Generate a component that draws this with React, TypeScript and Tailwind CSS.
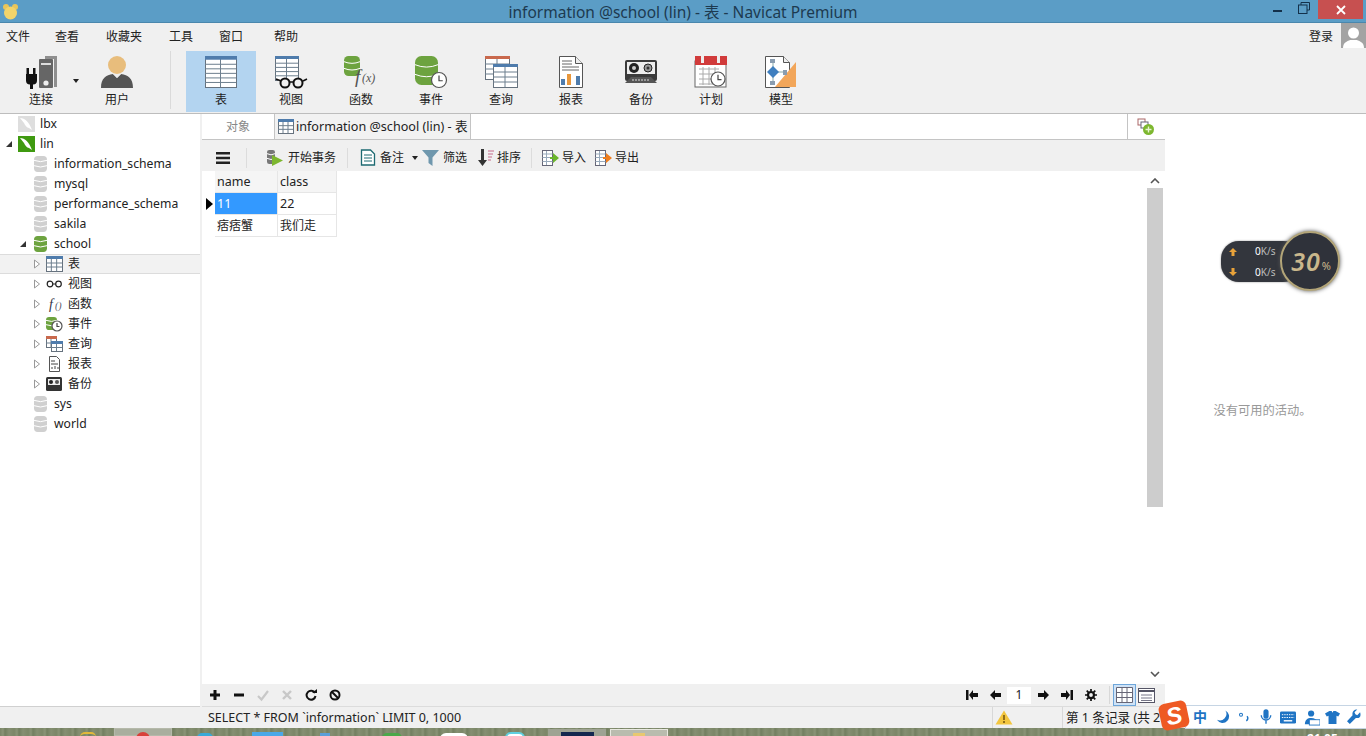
import React from "react";

const font = { fontFamily: '"Noto Sans","Noto Sans CJK SC",sans-serif' };

const S = ({ w = 48, h = 48, vb = "0 0 48 48", children }: { w?: number; h?: number; vb?: string; children: React.ReactNode }) => (
  <svg width={w} height={h} viewBox={vb} className="shrink-0 block">{children}</svg>
);

const TableGrid = ({ x, y, w, h, head = "#4f7cac", rows = 5, cols = 2 }: { x: number; y: number; w: number; h: number; head?: string; rows?: number; cols?: number }) => {
  const lines = [];
  const hh = Math.max(3, h * 0.12);
  for (let i = 1; i < rows; i++) lines.push(<line key={"r" + i} x1={x} x2={x + w} y1={y + hh + ((h - hh) * i) / rows} y2={y + hh + ((h - hh) * i) / rows} stroke="#6d7f8e" strokeWidth="1" />);
  for (let i = 1; i < cols; i++) lines.push(<line key={"c" + i} y1={y} y2={y + h} x1={x + (w * i) / cols} x2={x + (w * i) / cols} stroke="#6d7f8e" strokeWidth="1" />);
  return (
    <g>
      <rect x={x + 0.5} y={y + 0.5} width={w} height={h} fill="#fff" stroke="#66727e" />
      {lines}
      <rect x={x} y={y} width={w + 1} height={hh} fill={head} />
    </g>
  );
};

const Db = ({ x, y, w, h, c = "#6da33f" }: { x: number; y: number; w: number; h: number; c?: string }) => {
  const b = h / 3;
  return (
    <g>
      <rect x={x} y={y} width={w} height={h} rx={w * 0.28} fill={c} />
      {[1, 2].map((i) => (
        <path key={i} d={`M${x} ${y + i * b - 1}q${w / 2} ${b * 0.5} ${w} 0`} fill="none" stroke="#fff" strokeWidth="1" />
      ))}
    </g>
  );
};

const Clock = ({ cx, cy, r }: { cx: number; cy: number; r: number }) => (
  <g>
    <circle cx={cx} cy={cy} r={r} fill="#fff" stroke="#555" strokeWidth="1.2" />
    <path d={`M${cx} ${cy - r * 0.6}V${cy + r * 0.1}H${cx + r * 0.5}`} fill="none" stroke="#444" strokeWidth="1.2" />
  </g>
);

const IconConnect = () => (
  <S w={32} h={33} vb="0 0 32 33">
    <path d="M20 0h12v31h-3V3h-9z" fill="#8f8f8f" />
    <rect x="14" y="3" width="14" height="29" rx="1" fill="#666" />
    <rect x="16" y="7" width="10" height="2" fill="#ddd" />
    <circle cx="21" cy="27" r="2.6" fill="#eee" />
    <path d="M1.500 12h2.500v6h4v-6h2.500v6h1.500v6.500a4 4 0 0 1-4 4V33h-3v-4.500a4 4 0 0 1-4-4V18h.5z" fill="#111" />
  </S>
);
const IconUser = () => (
  <S w={36} h={36} vb="0 0 36 36">
    <path d="M2 34c0-10 5-13 12-14l4 4 4-4c7 1 12 4 12 14z" fill="#555" />
    <circle cx="18" cy="11" r="9" fill="#e8bd7c" />
    <path d="M14 20h8l-4 4z" fill="#eee" />
  </S>
);
const IconTable = () => <S w={34} h={34} vb="0 0 34 34"><TableGrid x={1} y={1} w={31} h={31} rows={6} /></S>;
const IconView = () => (
  <S w={34} h={34} vb="0 0 34 34">
    <TableGrid x={1} y={1} w={23} h={24} rows={5} />
    <rect x="4" y="24" width="26" height="8" fill="#f0f0f0" />
    <circle cx="11" cy="28" r="4.500" fill="#f0f0f0" stroke="#111" strokeWidth="2" />
    <circle cx="24" cy="28" r="4.500" fill="#f0f0f0" stroke="#111" strokeWidth="2" />
    <path d="M15 27h5M2 24l5 2M29 26l4-2" stroke="#111" strokeWidth="1.600" />
  </S>
);
const IconFunc = () => (
  <S w={34} h={34} vb="0 0 34 34">
    <Db x={0} y={1} w={16} h={20} />
    <text x="11" y="28" fontFamily="Liberation Serif, serif" fontStyle="italic" fontSize="19" fill="#555">f</text>
    <text x="18" y="27" fontFamily="Liberation Serif, serif" fontStyle="italic" fontSize="12" fill="#555">(x)</text>
  </S>
);
const IconEvent = () => (
  <S w={34} h={34} vb="0 0 34 34">
    <Db x={1} y={1} w={23} h={29} />
    <Clock cx={25} cy={25} r={7.500} />
  </S>
);
const IconQuery = () => (
  <S w={34} h={34} vb="0 0 34 34">
    <TableGrid x={1} y={1} w={24} h={23} head="#c9694d" rows={4} />
    <TableGrid x={9} y={9} w={24} h={23} rows={4} />
  </S>
);
const IconReport = () => (
  <S w={26} h={34} vb="0 0 26 34">
    <path d="M1.500 1.500h16l7 7v24h-23z" fill="#fff" stroke="#555" />
    <path d="M17.500 1.500v7h7" fill="#eee" stroke="#555" />
    <path d="M4 6h10M4 9h10M4 12h17M4 15h17" stroke="#666" />
    <rect x="3" y="24" width="4" height="6" fill="#4f7cac" />
    <rect x="9" y="19" width="4" height="11" fill="#e8973c" />
    <rect x="18" y="21" width="4" height="9" fill="#4f7cac" />
  </S>
);
const IconBackup = () => (
  <S w={34} h={26} vb="0 0 34 26">
    <rect x="1" y="1" width="32" height="21" rx="2" fill="#3b3b3b" />
    <rect x="3" y="3" width="28" height="12" fill="#eee" />
    <circle cx="10" cy="9" r="5" fill="#222" /><circle cx="10" cy="9" r="2" fill="#ccc" />
    <circle cx="24" cy="9" r="4" fill="#999" stroke="#222" /><circle cx="24" cy="9" r="1.500" fill="#333" />
    <path d="M1 24l6-6h20l6 6z" fill="#555" />
    <path d="M8 21h18" stroke="#ddd" strokeDasharray="2 1" />
  </S>
);
const IconPlan = () => (
  <S w={34} h={34} vb="0 0 34 34">
    <rect x="1" y="6" width="31" height="26" fill="#fff" stroke="#666" />
    <rect x="1" y="1" width="32" height="9" fill="#d13b3b" />
    <rect x="7" y="1" width="3" height="7" fill="#eee" /><rect x="23" y="1" width="3" height="7" fill="#eee" />
    <path d="M5 14h20M5 19h20M5 24h20M5 29h20M9 12v18M15 12v18M21 12v18" stroke="#aaa" />
    <Clock cx={24} cy={24} r={7} />
  </S>
);
const IconModel = () => (
  <S w={34} h={34} vb="0 0 34 34">
    <path d="M1.500 1.500h18l6 6v25h-24z" fill="#fff" stroke="#555" />
    <path d="M19.500 1.500v6h6" fill="#eee" stroke="#555" />
    <path d="M32 7v25H11z" fill="#f2a65a" />
    <path d="M9 6v24M9 17h14" stroke="#8aa" />
    <rect x="6" y="4" width="5" height="4" fill="#8a9db0" /><rect x="6" y="26" width="5" height="4" fill="#8a9db0" /><rect x="19" y="15" width="4" height="5" fill="#8a9db0" />
    <path d="M9 11l6 6-6 6-6-6z" fill="#3f7fbf" />
  </S>
);

const Tool = ({ icon, label, active = false }: { icon: React.ReactNode; label: string; active?: boolean }) => (
  <div className={`w-[70px] h-[61px] flex flex-col items-center ${active ? "bg-[#b3d4f0]" : ""}`}>
    <div className="h-[36px] mt-[3px] flex items-center justify-center">{icon}</div>
    <div className="text-[12px] leading-[16px] mt-[2px] text-[#222]">{label}</div>
  </div>
);

const DbSmall = ({ c = "#d0d0d0" }: { c?: string }) => (
  <S w={13} h={16} vb="0 0 13 16"><Db x={0} y={0} w={13} h={16} c={c} /></S>
);
const Expand = ({ open }: { open?: boolean }) =>
  open ? (
    <svg width="8" height="8" viewBox="0 0 8 8" className="shrink-0"><path d="M7 1v6H1z" fill="#333" /></svg>
  ) : (
    <svg width="8" height="10" viewBox="0 0 8 10" className="shrink-0"><path d="M1.500 1l5 4-5 4z" fill="#fff" stroke="#999" /></svg>
  );

const Conn = ({ color, bird }: { color: string; bird: string }) => (
  <S w={17} h={16} vb="0 0 17 16">
    <rect width="17" height="16" fill={color} />
    <path d="M2 2c5 0 9 4 12 12l-3-2c-2 0-4-3-5-5z" fill={bird} />
  </S>
);

const DbRow = ({ label, c }: { label: string; c?: string }) => (
  <div className="h-[20px] flex items-center pl-[34px] gap-[7px]"><DbSmall c={c} /><span>{label}</span></div>
);

const SubRow = ({ icon, label, sel }: { icon: React.ReactNode; label: string; sel?: boolean }) => (
  <div className={`h-[20px] flex items-center pl-[33px] ${sel ? "bg-[#f2f2f2] border-y border-[#dcdcdc]" : ""}`}>
    <Expand />
    <div className="w-[17px] h-[16px] ml-[5px] flex items-center justify-center">{icon}</div>
    <span className="ml-[5px] text-[12px]">{label}</span>
  </div>
);

const Mini = ({ children }: { children: React.ReactNode }) => <S w={17} h={16} vb="0 0 17 16">{children}</S>;

const Sidebar = () => (
  <div className="w-[200px] h-full bg-white text-[12.2px] text-[#222] shrink-0 border-b border-[#d0d0d0]">
    <div className="h-[20px] flex items-center pl-[18px] gap-[5px]"><Conn color="#dedede" bird="#fff" /><span>lbx</span></div>
    <div className="h-[20px] flex items-center pl-[5px]">
      <Expand open />
      <div className="ml-[5px]"><Conn color="#3f9a10" bird="#fff" /></div>
      <span className="ml-[5px]">lin</span>
    </div>
    <DbRow label="information_schema" />
    <DbRow label="mysql" />
    <DbRow label="performance_schema" />
    <DbRow label="sakila" />
    <div className="h-[20px] flex items-center pl-[19px]">
      <Expand open />
      <div className="ml-[7px]"><DbSmall c="#6da33f" /></div>
      <span className="ml-[7px]">school</span>
    </div>
    <SubRow sel label="表" icon={<Mini><TableGrid x={0} y={0} w={16} h={15} rows={3} cols={3} /></Mini>} />
    <SubRow label="视图" icon={<Mini><circle cx="4" cy="8" r="2.800" fill="none" stroke="#222" strokeWidth="1.200" /><circle cx="12.500" cy="8" r="2.800" fill="none" stroke="#222" strokeWidth="1.200" /><path d="M7 8h3" stroke="#222" /></Mini>} />
    <SubRow label="函数" icon={<Mini><text x="3" y="13" fontFamily="Liberation Serif, serif" fontStyle="italic" fontSize="14" fill="#334">f</text><text x="9" y="13" fontFamily="Liberation Serif, serif" fontStyle="italic" fontSize="10" fill="#556">()</text></Mini>} />
    <SubRow label="事件" icon={<Mini><Db x={0} y={1} w={11} h={13} /><Clock cx={11} cy={10} r={5} /></Mini>} />
    <SubRow label="查询" icon={<Mini><TableGrid x={0} y={0} w={10} h={11} head="#c9694d" rows={2} /><TableGrid x={5} y={5} w={11} h={10} rows={2} /></Mini>} />
    <SubRow label="报表" icon={<Mini><path d="M3.500.5h7l3 3v12h-10z" fill="#fff" stroke="#555" /><path d="M5 5h4M5 8h7M6 13v-2M9 13v-3M12 13v-2" stroke="#444" /></Mini>} />
    <SubRow label="备份" icon={<Mini><rect x="0" y="1" width="16" height="14" rx="1.500" fill="#333" /><rect x="2" y="3" width="12" height="6" fill="#eee" /><circle cx="5" cy="6" r="2" fill="#222" /><circle cx="11" cy="6" r="2" fill="#555" /></Mini>} />
    <DbRow label="sys" />
    <DbRow label="world" />
  </div>
);

const Sep = () => <div className="w-px h-[20px] bg-[#dcdcdc]" />;

const SubTool = ({ icon, label, className = "", gap = "gap-[3px]" }: { icon: React.ReactNode; label: string; className?: string; gap?: string }) => (
  <div className={`flex items-center ${gap} ${className}`}>{icon}<span>{label}</span></div>
);

const Doc = ({ arrow }: { arrow: string }) => (
  <S w={17} h={18} vb="0 0 17 18">
    <rect x="0.500" y="1.500" width="10" height="15" fill="#fff" stroke="#667" />
    <path d="M0.500 5h10M0.500 8.500h10M0.500 12.500h10M4.500 2v14" stroke="#9ab" />
    <path d="M8 8h3V4l6 5-6 5v-4H8z" fill={arrow} />
  </S>
);

const Nav = ({ d }: { d: string }) => <svg width="12" height="10" viewBox="0 0 12 10" className="shrink-0"><path d={d} fill="#111" /></svg>;

const TabBar = () => (
  <div className="h-[26px] flex bg-white border-b border-[#c4c4c4] shrink-0">
    <div className="w-[72px] flex items-center justify-center pt-[1px] text-[12px] text-[#888]">对象</div>
    <div className="w-[197px] bg-[#f2f2f2] border-x border-[#c4c4c4] flex items-center pl-[3px] gap-[2px] text-[12.6px] text-[#222] whitespace-nowrap">
      <S w={16} h={15} vb="0 0 16 15"><TableGrid x={0} y={0} w={15} h={14} rows={3} cols={3} /></S>
      <span className="pt-[1px]">information @school (lin) - 表</span>
    </div>
    <div className="flex-1" />
    <div className="w-[36px] mr-[2px] border-l border-[#c4c4c4] flex items-center justify-center">
      <S w={18} h={18} vb="0 0 18 18">
        <rect x="1" y="1" width="7" height="6" fill="#fff" stroke="#a66" />
        <rect x="4" y="4" width="7" height="6" fill="#fff" stroke="#667" />
        <circle cx="11.500" cy="11.500" r="5.500" fill="#7db72f" />
        <path d="M11.500 8.500v6M8.500 11.500h6" stroke="#e8f5d0" strokeWidth="1.400" />
      </S>
    </div>
  </div>
);

const SubToolbar = () => (
  <div className="h-[31px] pt-[4px] bg-[#f0f0f0] flex items-center text-[12px] text-[#222] shrink-0 whitespace-nowrap">
    <svg width="14" height="12" viewBox="0 0 14 12" className="ml-[14px] shrink-0"><path d="M0 0h14v2.600H0zM0 4.700h14v2.600H0zM0 9.400h14V12H0z" fill="#222" /></svg>
    <div className="ml-[16px]"><Sep /></div>
    <SubTool className="ml-[20px]" label="开始事务" icon={<S w={18} h={16} vb="0 0 18 16"><Db x={0} y={0} w={8} h={14} c="#777" /><path d="M5 5l11 5.500L5 16z" fill="#7db72f" /></S>} />
    <div className="ml-[11px]"><Sep /></div>
    <SubTool className="ml-[12px]" gap="gap-[4px]" label="备注" icon={<S w={16} h={17} vb="0 0 16 17"><path d="M1.500 1h9l4 4v11h-13z" fill="#fff" stroke="#1d6a72" strokeWidth="1.300" /><path d="M4 6h8M4 9h8M4 12h8" stroke="#1d6a72" /></S>} />
    <svg width="6" height="4" viewBox="0 0 6 4" className="ml-[8px]"><path d="M0 0h6L3 4z" fill="#222" /></svg>
    <SubTool className="ml-[4px]" gap="gap-[4px]" label="筛选" icon={<S w={17} h={16} vb="0 0 17 16"><path d="M0 0h17L10.500 7.500V16L6.500 13V7.500z" fill="#6f97ad" /></S>} />
    <SubTool className="ml-[10px]" label="排序" icon={<S w={17} h={17} vb="0 0 17 17"><path d="M4 0h3v11h3l-4.500 6L1 11h3z" fill="#333" /><path d="M11 2h6M11 5h5M11 8h4M11 11h3" stroke="#c66a8a" /></S>} />
    <div className="ml-[10px]"><Sep /></div>
    <SubTool className="ml-[10px]" label="导入" icon={<Doc arrow="#6bb52c" />} />
    <SubTool className="ml-[9px]" label="导出" icon={<Doc arrow="#ef7d1d" />} />
  </div>
);

const Cell = ({ w, children, cls = "" }: { w: number; children?: React.ReactNode; cls?: string }) => (
  <div style={{ width: w }} className={`h-[22px] flex items-center pl-[2px] border-r border-b border-[#e6e6e6] ${cls}`}>{children}</div>
);

const Grid = () => (
  <div className="flex-1 min-w-0 text-[12px] text-[#222]">
    <div className="flex pl-[13px]">
      <Cell w={63} cls="bg-[#f5f5f5] text-[12.5px] pt-[2px]">name</Cell>
      <Cell w={59} cls="bg-[#f5f5f5] text-[12.5px] pt-[2px]">class</Cell>
    </div>
    <div className="flex">
      <div className="w-[13px] h-[22px] flex items-center justify-end pr-[2px]">
        <svg width="8" height="12" viewBox="0 0 8 12"><path d="M1 0l7 6-7 6z" fill="#000" /></svg>
      </div>
      <Cell w={63} cls="bg-[#3399ff] text-white text-[12.5px] pt-[2px]">11</Cell>
      <Cell w={59} cls="text-[12.5px] pt-[2px]">22</Cell>
    </div>
    <div className="flex pl-[13px]">
      <Cell w={63}>痞痞蟹</Cell>
      <Cell w={59}>我们走</Cell>
    </div>
  </div>
);

const Scrollbar = () => (
  <div className="w-[16px] mr-[2px] h-full bg-white flex flex-col items-center shrink-0">
    <svg width="10" height="6" viewBox="0 0 10 6" className="mt-[7px] shrink-0"><path d="M1 5l4-4 4 4" fill="none" stroke="#555" strokeWidth="1.600" /></svg>
    <div className="w-full h-[319px] bg-[#cdcdcd] mt-[4px]" />
    <div className="flex-1" />
    <svg width="10" height="6" viewBox="0 0 10 6" className="mb-[7px] shrink-0"><path d="M1 1l4 4 4-4" fill="none" stroke="#555" strokeWidth="1.600" /></svg>
  </div>
);

const BottomBar = () => (
  <div className="h-[23px] bg-[#f0f0f0] flex items-center shrink-0 border-b border-[#dcdcdc]">
    <div className="flex items-center gap-[10px] ml-[6px]">
      <svg width="14" height="14" viewBox="0 0 14 14"><path d="M5.500 2h3v3.500H12v3H8.500V12h-3V8.500H2v-3h3.500z" fill="#111" /></svg>
      <svg width="14" height="14" viewBox="0 0 14 14"><path d="M2 5.500h10v3H2z" fill="#111" /></svg>
      <svg width="14" height="14" viewBox="0 0 14 14"><path d="M2 8l3.500 3.500L12 3" fill="none" stroke="#c8c8c8" strokeWidth="2.200" /></svg>
      <svg width="14" height="14" viewBox="0 0 14 14"><path d="M3 3l8 8M11 3l-8 8" stroke="#c8c8c8" strokeWidth="2.400" /></svg>
      <svg width="14" height="14" viewBox="0 0 14 14"><path d="M11 5a4.500 4.500 0 1 0 .5 3" fill="none" stroke="#111" strokeWidth="2" /><path d="M8 5h5V1z" fill="#111" /></svg>
      <svg width="14" height="14" viewBox="0 0 14 14"><circle cx="7" cy="7" r="4.500" fill="none" stroke="#111" strokeWidth="2" /><path d="M4 4l6 6" stroke="#111" strokeWidth="2" /></svg>
    </div>
    <div className="flex-1" />
    <div className="flex items-center">
      <Nav d="M0 0h2.500v10H0zM3 5l4-5v3h5v4H7v3z" />
      <div className="ml-[11px]"><Nav d="M1 5l5-5v3h6v4H6v3z" /></div>
      <div className="w-[24px] h-[17px] ml-[6px] bg-white flex items-center justify-center text-[12px] text-[#222]">1</div>
      <div className="ml-[7px]"><Nav d="M11 5L6 0v3H0v4h6v3z" /></div>
      <div className="ml-[11px]"><Nav d="M12 0H9.500v10H12zM9 5L5 0v3H0v4h5v3z" /></div>
      <svg width="12" height="12" viewBox="0 0 14 14" className="ml-[12px]"><circle cx="7" cy="7" r="3.500" fill="none" stroke="#111" strokeWidth="2.600" /><path d="M7 0v3M7 11v3M0 7h3M11 7h3M2 2l2 2M10 10l2 2M2 12l2-2M10 4l2-2" stroke="#111" strokeWidth="2" /></svg>
      <div className="w-px h-[18px] bg-[#d8d8d8] ml-[12px]" />
      <div className="w-[23px] h-[22px] ml-[3px] bg-[#cfe3f7] border border-[#6ea6da] flex items-center justify-center">
        <svg width="17" height="16" viewBox="0 0 17 16"><path d="M.5.5h16v15H.5zM.5 5.500h16M.5 10.500h16M6 .5v15M11 .5v15" fill="#fff" stroke="#667" /></svg>
      </div>
      <div className="ml-[2px] mr-[10px]">
        <svg width="17" height="15" viewBox="0 0 17 15" className="block"><rect x=".5" y=".5" width="16" height="14" fill="#fff" stroke="#556" /><path d="M1 3h15" stroke="#556" strokeWidth="2" /><path d="M3 7h11M3 10h11M3 12.500h11" stroke="#778" /></svg>
      </div>
    </div>
  </div>
);

const StatusBar = () => (
  <div className="h-[21px] bg-[#f0f0f0] flex items-center text-[12.5px] text-[#222] shrink-0 whitespace-nowrap overflow-hidden">
    <div className="w-[202px] shrink-0" />
    <div className="ml-[6px] flex-1 pt-[1px]">SELECT * FROM `information` LIMIT 0, 1000</div>
    <div className="w-[70px] h-full border-l border-[#d8d8d8] flex items-center pl-[2px]">
      <svg width="18" height="15" viewBox="0 0 18 15"><path d="M9 .5l8.500 14H.5z" fill="#f3c63f" /><path d="M9 5v5M9 11v2" stroke="#7a5a10" strokeWidth="1.600" /></svg>
    </div>
    <div className="w-[304px] h-full border-l border-[#d8d8d8] pl-[3px] pt-[1px] flex items-center text-[12.6px]">第 1 条记录 (共 2</div>
  </div>
);

const Taskbar = () => (
  <div className="h-[8px] flex items-start shrink-0 relative overflow-hidden bg-[#7d8a68] bg-[repeating-linear-gradient(90deg,#7a8667_0px,#8a9477_3px,#727f60_5px,#858f72_9px,#7c8768_14px)]">
    <div className="w-[16px] ml-[80px] mt-[4px] h-[5px] rounded-t-full border-t-[2px] border-[#e2b93a] shrink-0" />
    <div className="w-[58px] ml-[18px] h-full bg-[#a9ae9e] border border-[#b5b9aa] flex justify-center shrink-0"><div className="w-[14px] h-[14px] mt-[3px] rounded-full bg-[#d8403a]" /></div>
    <div className="w-[16px] ml-[25px] mt-[5px] h-[10px] rounded-full bg-[#39a9d8] shrink-0" />
    <div className="w-[31px] ml-[39px] mt-[4px] h-full bg-[#4aa8e8] shrink-0" />
    <div className="w-[10px] ml-[37px] mt-[5px] h-full bg-[#5a9fd8] shrink-0" />
    <div className="w-[20px] ml-[52px] mt-[5px] h-[10px] rounded-full bg-[#4ba84a] shrink-0" />
    <div className="w-[28px] ml-[38px] mt-[5px] h-full rounded-t-[6px] bg-white shrink-0" />
    <div className="w-[20px] ml-[37px] mt-[4px] h-[12px] rounded-full border-2 border-[#5fd0e0] bg-white shrink-0" />
    <div className="w-[58px] ml-[23px] mt-[1px] h-full bg-[#9ea393] flex justify-center shrink-0"><div className="w-[33px] h-full mt-[3px] bg-[#14284f]" /></div>
    <div className="w-[58px] ml-[4px] mt-[1px] h-full bg-[#b9bcae] border border-[#e8e8e0] flex justify-center shrink-0"><div className="w-[12px] h-full mt-[3px] bg-[#e8c870]" /></div>
    <div className="absolute left-[1307px] top-[5px] text-[12px] leading-[12px] text-white font-bold">21:05</div>
  </div>
);

const NetWidget = () => (
  <div className="absolute left-[1221px] top-[230px] w-[120px] h-[62px]">
    <div className="absolute left-0 top-[11px] w-[80px] h-[41px] rounded-[18px] bg-[#33363d] text-[#bbb] text-[10px] leading-[12px] shadow-[0_0_2px_#888]">
      <svg width="8" height="8" viewBox="0 0 8 8" className="absolute left-[8px] top-[7px]"><path d="M4 0l4 4H5.500v4h-3V4H0z" fill="#e8a23a" /></svg>
      <div className="absolute left-[34px] top-[4px]"><span className="text-white">0</span>K/s</div>
      <svg width="8" height="8" viewBox="0 0 8 8" className="absolute left-[8px] top-[27px]"><path d="M4 8L0 4h2.500V0h3v4H8z" fill="#e8a23a" /></svg>
      <div className="absolute left-[34px] top-[25px]"><span className="text-white">0</span>K/s</div>
    </div>
    <div className="absolute left-[59px] top-[1px] w-[60px] h-[60px] rounded-full bg-[#2f323a] border-[2px] border-[#b3a578] flex items-center justify-center text-[#c9b78c] shadow-[0_0_4px_#555]">
      <span className="text-[25px] leading-none italic font-semibold tracking-[1px] ml-[2px]">30</span>
      <span className="text-[11px] leading-none mt-[8px] ml-[1px]">%</span>
    </div>
  </div>
);

const Ime = () => (
  <div className="absolute left-[1160px] top-[701px] h-[28px] w-[206px] flex items-end">
    <div className="relative z-10 shrink-0 w-[28px] h-[27px] rounded-[6px] bg-[#ee5a24] -rotate-12 flex items-center justify-center text-white text-[24px] leading-none font-bold italic" style={{ fontFamily: '"Liberation Sans",sans-serif' }}>S</div>
    <div className="flex-1 -ml-[3px] h-[24px] bg-white border-y border-l border-[#c6d5e4] flex items-center pl-[7px] text-[#1f74c4]">
      <span className="text-[14px] font-bold leading-none w-[14px] shrink-0">中</span>
      <svg width="15" height="16" viewBox="0 0 16 16" className="ml-[9px] shrink-0"><path d="M10 1a7 7 0 1 1-9 10A7 7 0 0 0 10 1z" fill="#1f74c4" /></svg>
      <svg width="12" height="14" viewBox="0 0 16 14" className="ml-[7px] shrink-0"><circle cx="4" cy="4" r="2" fill="none" stroke="#1f74c4" strokeWidth="1.400" /><path d="M12 6c2 2 1 5-1 6" fill="none" stroke="#1f74c4" strokeWidth="2" /></svg>
      <svg width="12" height="18" viewBox="0 0 14 18" className="ml-[10px] shrink-0"><rect x="4" y="0" width="6" height="11" rx="3" fill="#1f74c4" /><path d="M1.500 7a5.500 5.500 0 0 0 11 0M7 13v4" fill="none" stroke="#1f74c4" strokeWidth="1.600" /></svg>
      <svg width="16" height="13" viewBox="0 0 17 13" className="ml-[8px] shrink-0"><rect width="17" height="13" rx="1.500" fill="#1f74c4" /><path d="M2 3.500h13M2 6.500h13" stroke="#fff" strokeDasharray="1.500 1" /><path d="M4 10h9" stroke="#fff" strokeWidth="1.500" /></svg>
      <svg width="16" height="17" viewBox="0 0 18 17" className="ml-[8px] shrink-0"><circle cx="8" cy="4" r="3.500" fill="#1f74c4" /><path d="M1 16c0-5 3-7 7-7s6 2 6 2v5z" fill="#1f74c4" /><rect x="6" y="11" width="12" height="6" fill="#fff" stroke="#1f74c4" /></svg>
      <svg width="15" height="15" viewBox="0 0 17 15" className="ml-[5px] shrink-0"><path d="M5 0h2.500L8.500 2 9.500 0H12l5 3-2 3.500-2-1V15H4V5.500l-2 1L0 3z" fill="#1f74c4" /></svg>
      <svg width="14" height="16" viewBox="0 0 15 16" className="ml-[7px] shrink-0"><path d="M14 3l-3 3-2-1-1-2 3-3C8 -.5 5 2 6 6L0 12.500 3 15.500 9.500 9c4 1 6-2 4.500-6z" fill="#1f74c4" /></svg>
    </div>
  </div>
);

export default function App() {
  return (
    <div className="w-[1366px] h-[736px] relative overflow-hidden flex flex-col bg-white" style={font}>
      {/* title */}
      <div className="h-[23px] bg-[#5b9dc6] border-b border-[#4a87ad] flex items-center shrink-0 relative">
        <svg width="20" height="17" viewBox="0 0 20 17" className="ml-[1px]"><circle cx="5" cy="4" r="3" fill="#e9c55a" /><circle cx="14" cy="4" r="3" fill="#e9c55a" /><circle cx="9.500" cy="10" r="6.500" fill="#f2d46b" /></svg>
        <div className="flex-1 text-center text-[15.5px] text-[#1d3a50] -ml-[21px] pt-[1px] leading-[22px]">information @school (lin) - 表 - Navicat Premium</div>
        <div className="absolute right-[3px] top-0 h-[19px] flex items-center">
          <div className="w-[9px] h-[2px] bg-[#13304a] mt-[3px]" />
          <svg width="12" height="12" viewBox="0 0 12 12" className="ml-[16px] mb-[3px]"><path d="M3 3V.5h8.500V8H9" fill="none" stroke="#13304a" /><rect x=".5" y="3" width="8.500" height="8.500" fill="none" stroke="#13304a" /></svg>
          <div className="w-[45px] h-[19px] ml-[8px] bg-[#c75050] flex items-center justify-center">
            <svg width="10" height="10" viewBox="0 0 10 10"><path d="M1 1l8 8M9 1l-8 8" stroke="#fff" strokeWidth="1.800" /></svg>
          </div>
        </div>
      </div>
      {/* menu + toolbar */}
      <div className="h-[91px] bg-[#f0f0f0] border-b border-[#bdbdbd] shrink-0 flex flex-col">
        <div className="h-[28px] flex items-center text-[12px] text-[#222] relative shrink-0">
          <span className="ml-[6px]">文件</span>
          <span className="ml-[25px]">查看</span>
          <span className="ml-[27px]">收藏夹</span>
          <span className="ml-[27px]">工具</span>
          <span className="ml-[26px]">窗口</span>
          <span className="ml-[31px]">帮助</span>
          <div className="flex-1" />
          <span className="mr-[8px]">登录</span>
          <div className="w-[25px] h-[25px] bg-[#a3a3a3] overflow-hidden self-start">
            <svg width="25" height="25" viewBox="0 0 25 25"><circle cx="12.500" cy="10" r="5.500" fill="#fff" /><path d="M2 25c0-6 5-7 7-8h7c2 1 7 2 7 8z" fill="#fff" /></svg>
          </div>
        </div>
        <div className="flex h-[62px]">
          <div className="w-[170px] shrink-0 flex items-start">
            <div className="w-[64px] ml-[16px] h-[61px] flex flex-col items-center">
              <div className="h-[36px] mt-[3px] flex items-center -ml-[14px]"><IconConnect /></div>
              <div className="text-[12px] leading-[16px] mt-[2px] text-[#222] -ml-[14px]">连接</div>
            </div>
            <svg width="6" height="4" viewBox="0 0 6 4" className="mt-[28px] -ml-[7px] shrink-0"><path d="M0 0h6L3 4z" fill="#222" /></svg>
            <div className="w-[70px] ml-[3px] h-[61px] flex flex-col items-center">
              <div className="h-[36px] mt-[3px] flex items-center"><IconUser /></div>
              <div className="text-[12px] leading-[16px] mt-[2px] text-[#222]">用户</div>
            </div>
          </div>
          <div className="w-px h-[58px] bg-[#dadada]" />
          <div className="w-[15px]" />
          <Tool active icon={<IconTable />} label="表" />
          <Tool icon={<IconView />} label="视图" />
          <Tool icon={<IconFunc />} label="函数" />
          <Tool icon={<IconEvent />} label="事件" />
          <Tool icon={<IconQuery />} label="查询" />
          <Tool icon={<IconReport />} label="报表" />
          <Tool icon={<IconBackup />} label="备份" />
          <Tool icon={<IconPlan />} label="计划" />
          <Tool icon={<IconModel />} label="模型" />
        </div>
      </div>
      {/* body */}
      <div className="h-[593px] flex shrink-0">
        <Sidebar />
        <div className="w-[2px] bg-[#f0f0f0] shrink-0" />
        <div className="w-[963px] flex flex-col shrink-0">
          <TabBar />
          <SubToolbar />
          <div className="flex-1 flex min-h-0 bg-white">
            <Grid />
            <Scrollbar />
          </div>
          <BottomBar />
        </div>
        <div className="flex-1 bg-white flex items-center justify-center pt-[2px] text-[12.25px] text-[#999]">
          <span className="-ml-[6px]">没有可用的活动。</span>
        </div>
      </div>
      <StatusBar />
      <Taskbar />
      <NetWidget />
      <Ime />
    </div>
  );
}
